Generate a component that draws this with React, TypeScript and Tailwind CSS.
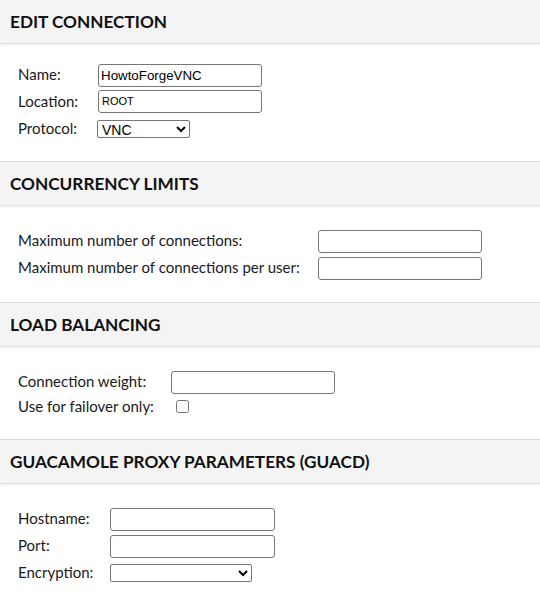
import React from "react";

const inputCls =
  "h-[23px] w-[164px] border border-[#767676] rounded-[3px] bg-white px-[2px] text-[13.33px] text-black outline-none";
const labelCls = "text-[15px] text-[#1a1a1a]";

function Header({ title, first }: { title: string; first?: boolean }) {
  return (
    <div
      className={
        "flex items-center bg-[#f4f4f4] border-b border-[#e2e2e2] shadow-[0_1px_2px_rgba(0,0,0,0.08)] px-[10px] " +
        (first ? "h-[44px]" : "h-[45px] border-t border-t-[#dcdcdc]")
      }
    >
      <h2 className="font-bold text-[17.2px] leading-none text-[#111] pt-[1px]">{title}</h2>
    </div>
  );
}

export default function App() {
  return (
    <div
      className="w-[540px] h-[602px] overflow-hidden bg-white"
      style={{ fontFamily: "Lato, 'Noto Sans', sans-serif" }}
    >
      <Header title="EDIT CONNECTION" first />
      <div className="pl-[18px] pt-[17px] pb-[19px]">
        <div className="grid grid-cols-[80px_1fr] auto-rows-[27px] items-center">
          <span className={labelCls}>Name:</span>
          <div>
            <input
              className={inputCls}
              defaultValue="HowtoForgeVNC"
              style={{ fontFamily: "Arial, 'Liberation Sans', sans-serif" }}
            />
          </div>
          <span className={labelCls}>Location:</span>
          <div>
            <div
              className="h-[23px] w-[164px] border border-[#767676] rounded-[3px] bg-white px-[3px] flex items-center text-[11px] text-black"
              style={{ fontFamily: "Arial, 'Liberation Sans', sans-serif" }}
            >
              ROOT
            </div>
          </div>
          <span className={labelCls}>Protocol:</span>
          <div className="-ml-[1px]">
            <select
              className="h-[18px] w-[93px] border border-[#767676] rounded-[2px] bg-white text-[14px] leading-none text-black"
              style={{ fontFamily: "Arial, 'Liberation Sans', sans-serif" }}
              defaultValue="VNC"
            >
              <option>VNC</option>
            </select>
          </div>
        </div>
      </div>

      <Header title="CONCURRENCY LIMITS" />
      <div className="pl-[18px] py-[21px]">
        <div className="grid grid-cols-[300px_1fr] auto-rows-[27px] items-center">
          <span className={labelCls}>Maximum number of connections:</span>
          <div>
            <input className={inputCls} />
          </div>
          <span className={labelCls}>Maximum number of connections per user:</span>
          <div>
            <input className={inputCls} />
          </div>
        </div>
      </div>

      <Header title="LOAD BALANCING" />
      <div className="pl-[18px] pt-[21px] pb-[21px]">
        <div className="grid grid-cols-[153px_1fr] items-center">
          <span className={labelCls + " h-[27px] flex items-center"}>Connection weight:</span>
          <div>
            <input className={inputCls} />
          </div>
          <span className={labelCls + " h-[23px] flex items-center"}>Use for failover only:</span>
          <div className="flex items-center h-[23px]">
            <input type="checkbox" className="ml-[5px] w-[13px] h-[13px]" />
          </div>
        </div>
      </div>

      <Header title="GUACAMOLE PROXY PARAMETERS (GUACD)" />
      <div className="pl-[18px] pt-[21px] pb-[21px]">
        <div className="grid grid-cols-[92px_1fr] auto-rows-[27px] items-center">
          <span className={labelCls}>Hostname:</span>
          <div>
            <input className={inputCls + " w-[165px]"} />
          </div>
          <span className={labelCls}>Port:</span>
          <div>
            <input className={inputCls + " w-[165px]"} />
          </div>
          <span className={labelCls}>Encryption:</span>
          <div>
            <select className="h-[18px] w-[142px] border border-[#767676] rounded-[2px] bg-white text-[13.33px] text-black">
              <option></option>
            </select>
          </div>
        </div>
      </div>
    </div>
  );
}
